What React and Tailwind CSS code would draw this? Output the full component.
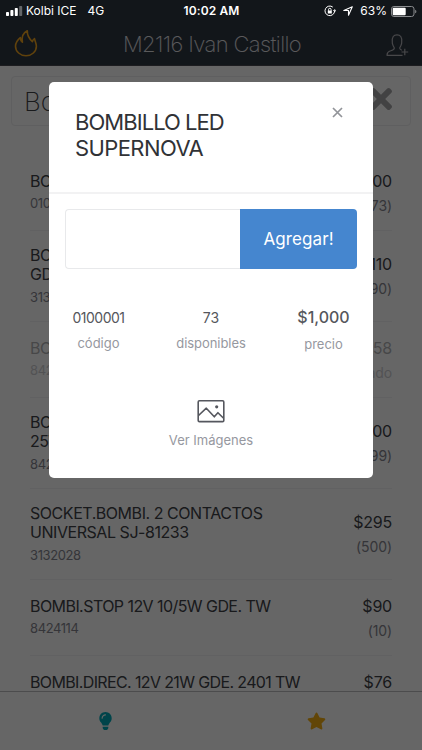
import { FaLightbulb, FaStar, FaTimes } from 'react-icons/fa';

const products = [
  { lines: ['BOMBI.'], code: '0100001', price: '$1,000', stock: '(73)' },
  { lines: ['BOMBI.', 'GDE.'], code: '3132011', price: '$110', stock: '(90)' },
  { lines: ['BOMBI.'], code: '8424110', price: '$158', stock: 'agotado', soldOut: true },
  { lines: ['BOMBI.', '25W'], code: '8424112', price: '$1,200', stock: '(99)' },
  { lines: ['SOCKET.BOMBI. 2 CONTACTOS', 'UNIVERSAL SJ-81233'], code: '3132028', price: '$295', stock: '(500)', tracking: 'tracking-[-0.45px]' },
  { lines: ['BOMBI.STOP 12V 10/5W GDE. TW'], code: '8424114', price: '$90', stock: '(10)' },
  { lines: ['BOMBI.DIREC. 12V 21W GDE. 2401 TW'], code: '8424115', price: '$76', stock: '(24)', tracking: 'tracking-[-0.63px]' },
];

function StatusBar() {
  return (
    <div className="absolute inset-x-0 top-0 z-30 flex h-[22px] items-center justify-between pl-[6px] pr-[5px] font-['Inter'] text-[12px] text-white">
      <div className="flex w-[150px] items-center">
        <svg className="mr-[3px] h-[10px] w-[17px]" viewBox="0 0 17 10" fill="currentColor">
          <rect x="0" y="6" width="3" height="4" rx=".8" />
          <rect x="4.4" y="4" width="3" height="6" rx=".8" />
          <rect x="8.8" y="2" width="3" height="8" rx=".8" />
          <rect x="13.2" y="0" width="3" height="10" rx=".8" opacity=".35" />
        </svg>
        <span>Kolbi ICE</span>
        <span className="ml-[11px]">4G</span>
      </div>
      <span className="whitespace-nowrap text-[12px] font-semibold tracking-[0.1px]">10:02 AM</span>
      <div className="flex w-[150px] items-center justify-end">
        <svg className="mr-[7px] h-[12px] w-[12px]" viewBox="0 0 12 12" fill="none" stroke="currentColor" strokeWidth="1">
          <path d="M10.6 6A4.8 4.8 0 1 1 8.8 2.1M10.7 4.3v2.1M9.4 5.2l1.3 1.5 1.3-1.5" />
          <rect x="3.8" y="5.5" width="4" height="3" fill="currentColor" stroke="none" />
          <path d="M4.5 5.7V4.6a1.3 1.3 0 0 1 2.6 0v1.1" />
        </svg>
        <svg className="mr-[7px] h-[10px] w-[10px]" viewBox="0 0 10 10" fill="none" stroke="currentColor" strokeWidth="1.1" strokeLinejoin="round">
          <path d="M9.3.7 5.5 9.2V4.5H.8z" />
        </svg>
        <span>63%</span>
        <svg className="ml-[4px] h-[11px] w-[26px]" viewBox="0 0 26 11">
          <rect x=".5" y=".5" width="22.5" height="10" rx="2.4" fill="none" stroke="#8b8d90" />
          <rect x="1.7" y="1.7" width="13" height="7.6" rx="1" fill="#fff" />
          <path d="M24.2 3.7c1.6.5 1.6 3.1 0 3.6z" fill="#8b8d90" />
        </svg>
      </div>
    </div>
  );
}

function Header() {
  return (
    <header className="flex h-[66px] shrink-0 items-end justify-between border-b border-[#4a4a50] bg-[#2f3743] pb-[8px] pl-[14px] pr-[13px]">
      <svg className="h-[28px] w-[24px]" viewBox="0 0 24 28" fill="none" stroke="#f0a51e" strokeWidth="1.6" strokeLinejoin="round" strokeLinecap="round">
        <path d="M13.3 1.8C8.9 4 7.6 8.4 8.4 13.2 7.1 12 6.4 10.4 6.3 8.6 3.2 11.2 1.5 14 1.5 17.2 1.5 22.5 6.3 26.8 12 26.8S22.4 22.5 22.4 17.2C22.4 14.4 21.1 12.5 20.5 9.6 19.5 10.2 18.7 11.3 18.4 12.6 16.2 10.7 13.1 6.4 13.3 1.8z" />
      </svg>
      <h1 className="font-['Inter'] text-[22px] font-extralight leading-[26px] tracking-[-0.62px] text-[#e0e0e4]">M2116 Ivan Castillo</h1>
      <svg className="h-[23px] w-[23px]" viewBox="0 0 23 23" fill="none" stroke="#b4b4b9" strokeWidth="1.2" strokeLinejoin="round">
        <path d="M16.5 21.3H1c.1-2.8.8-3.7 3-4.3 2.5-.7 4.1-.9 4.3-2.7.1-1-.8-1.6-1.3-2.9-.4-1-.9-2.4-.7-3.5C5.9 3 7.6.8 11 .8s5.1 2.2 4.7 7.1c.2 1.1-.3 2.5-.7 3.5-.5 1.3-1.4 1.9-1.3 2.9.1 1.1 1 1.5 2.1 1.9M18.8 14.8v6.5M15.5 18h6.7" />
      </svg>
    </header>
  );
}

function ProductRow({ product }) {
  const height = product.lines.length > 1 ? 'h-[91px]' : 'h-[76px]';
  const fade = product.soldOut ? 'opacity-40' : '';
  return (
    <li className={`flex shrink-0 items-center justify-between border-b border-[#f3f3f6] ${height}`}>
      <div className={`pt-[3px] ${fade}`}>
        {product.lines.map((line) => (
          <p key={line} className={`whitespace-nowrap text-[16px] leading-[19.5px] text-[#404247] ${product.tracking || 'tracking-[-0.56px]'}`}>{line}</p>
        ))}
        <p className="text-[13px] leading-[25px] tracking-[-0.4px] text-[#85868f]">{product.code}</p>
      </div>
      <div className={`pt-[1px] text-right ${fade}`}>
        <p className="text-[16px] leading-[25px] tracking-[-0.2px] text-[#404247]">{product.price}</p>
        <p className="text-[14px] leading-[24px] tracking-[-0.1px] text-[#85868f]">{product.stock}</p>
      </div>
    </li>
  );
}

function TabBar() {
  return (
    <nav className="grid h-[59px] shrink-0 grid-cols-2 place-items-center border-t border-[#bdbdc0] bg-white">
      <FaLightbulb className="h-[18px] w-[13px] text-[#00aab9]" />
      <FaStar className="h-[18px] w-[19px] text-[#f5ae12]" />
    </nav>
  );
}

function ProductModal() {
  return (
    <section role="dialog" className="flex h-[396px] w-[324px] flex-col rounded-[5px] bg-white">
      <div className="flex h-[112px] shrink-0 justify-between border-b-2 border-[#f2f2f3] pl-[26px] pr-[30px]">
        <h2 className="pt-[27px] text-[22px] leading-[26px] text-[#303236]">
          <span className="block tracking-[-0.95px]">BOMBILLO LED</span>
          <span className="block tracking-[-0.6px]">SUPERNOVA</span>
        </h2>
        <svg className="mt-[25px] h-[11px] w-[11px]" viewBox="0 0 11 11" stroke="#929499" strokeWidth="1.7">
          <path d="m1 1 9 9M10 1l-9 9" />
        </svg>
      </div>
      <div className="mx-4 mt-[15px] flex h-[60px] shrink-0">
        <input aria-label="Cantidad" className="min-w-0 flex-1 rounded-l-[4px] border border-r-0 border-[#e8e9eb] bg-white outline-none" />
        <button className="w-[117px] rounded-r-[4px] bg-[#4586cf] pt-[1px] text-[17px] tracking-[0.1px] text-white">Agregar!</button>
      </div>
      <div className="mt-[36px] flex shrink-0 text-center">
        <div className="w-[99px]">
          <p className="text-[14px] leading-[25px] tracking-[-0.5px] text-[#55575c]">0100001</p>
          <p className="pt-[1px] text-[13px] leading-[25px] text-[#9698a0]">código</p>
        </div>
        <div className="w-[126px]">
          <p className="text-[14px] leading-[25px] text-[#55575c]">73</p>
          <p className="pt-[1px] text-[13px] leading-[25px] tracking-[-0.05px] text-[#9698a0]">disponibles</p>
        </div>
        <div className="w-[99px]">
          <p className="text-[16px] font-medium leading-[25px] text-[#55575c]">$1,000</p>
          <p className="pt-[2px] text-[13px] leading-[25px] text-[#9698a0]">precio</p>
        </div>
      </div>
      <div className="mt-[42px] flex flex-col items-center">
        <svg className="h-[24px] w-[28px]" viewBox="0 0 28 24" fill="none" stroke="#55575e" strokeWidth="1.6" strokeLinejoin="round">
          <rect x="1.2" y="1.8" width="25.6" height="20.8" rx="1.2" />
          <path d="m1.5 16.5 7.8-7.3 8 8.6 3.6-4.1 5.7 5.6" />
          <circle cx="19.7" cy="7.8" r="1.6" fill="#55575e" stroke="none" />
        </svg>
        <p className="mt-[5px] text-[13px] leading-[25px] text-[#9698a0]">Ver Imágenes</p>
      </div>
    </section>
  );
}

export default function App() {
  return (
    <div className="relative flex h-[750px] w-[422px] flex-col overflow-hidden bg-white font-['Inter',sans-serif]">
      <StatusBar />
      <Header />
      <main className="min-h-0 flex-1 overflow-hidden">
        <div className="mx-[11px] mt-[10px] flex h-[50px] items-center justify-between rounded-[4px] border border-[#eeeeef] pl-[12px] pr-[18px]">
          <span className="text-[26px] font-extralight text-[#404247]">Bombi</span>
          <FaTimes className="mb-[4px] h-[32px] w-[22px] text-[#a6a6a8]" />
        </div>
        <ul className="mx-[30px] mt-[29px] flex flex-col">
          {products.map((product) => (
            <ProductRow key={product.code} product={product} />
          ))}
        </ul>
      </main>
      <TabBar />
      <div className="absolute inset-0 z-20 flex items-start justify-center bg-black/60 pt-[82px]">
        <ProductModal />
      </div>
    </div>
  );
}
